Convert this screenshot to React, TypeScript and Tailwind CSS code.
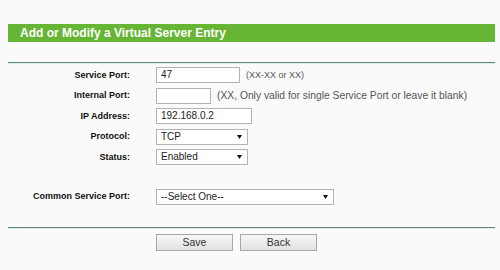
import React from "react";

const font = { fontFamily: '"Liberation Sans", Arial, sans-serif' };

function Arrow() {
  return (
    <svg width="5" height="4" viewBox="0 0 5 4" className="shrink-0">
      <polygon points="0,0 5,0 2.5,4" fill="#111" />
    </svg>
  );
}

function Box({ w, text, select }: { w: string; text?: string; select?: boolean }) {
  return (
    <div
      className={`${w} h-[16px] bg-white border border-[#b4b4b4] flex items-center pl-[4px] pr-[5px] text-[10px] text-[#222] justify-between`}
    >
      <span className="leading-none">{text}</span>
      {select ? <Arrow /> : null}
    </div>
  );
}

function Row({ label, children }: { label: string; children: React.ReactNode }) {
  return (
    <div className="h-[20.5px] flex items-center">
      <div className="w-[122px] text-right font-bold text-[9px] text-[#111] pr-0">{label}</div>
      <div className="ml-[26px] flex items-center">{children}</div>
    </div>
  );
}

export default function App() {
  return (
    <div className="w-[500px] h-[270px] bg-[#fafafa] pt-[24px] pl-[8px] pr-[5px]" style={font}>
      <div className="h-[18px] bg-[#66b535] flex items-center pl-[12px]">
        <span className="text-white font-bold text-[12px] leading-none">Add or Modify a Virtual Server Entry</span>
      </div>
      <div className="mt-[20px] h-[1px] bg-[#5f887e]" />
      <div className="h-[1px] bg-[#dfeae6]" />
      <div className="mt-[1px]">
        <Row label="Service Port:">
          <Box w="w-[84px]" text="47" />
          <span className="ml-[6px] text-[9px] text-[#555]">(XX-XX or XX)</span>
        </Row>
        <Row label="Internal Port:">
          <Box w="w-[55px]" />
          <span className="ml-[6px] text-[10.3px] text-[#555]">(XX, Only valid for single Service Port or leave it blank)</span>
        </Row>
        <Row label="IP Address:">
          <Box w="w-[96px]" text="192.168.0.2" />
        </Row>
        <Row label="Protocol:">
          <Box w="w-[92px]" text="TCP" select />
        </Row>
        <Row label="Status:">
          <Box w="w-[92px]" text="Enabled" select />
        </Row>
      </div>
      <div className="mt-[19px]">
        <Row label="Common Service Port:">
          <Box w="w-[178px]" text="--Select One--" select />
        </Row>
      </div>
      <div className="mt-[20px] h-[1px] bg-[#5f887e]" />
      <div className="h-[1px] bg-[#dfeae6]" />
      <div className="mt-[5px] flex gap-[7px] pl-[148px]">
        <div className="w-[77px] h-[17px] border border-[#a8a8a8] bg-gradient-to-b from-[#f7f7f7] to-[#e2e2e2] flex items-center justify-center text-[10.5px] text-[#333]">
          Save
        </div>
        <div className="w-[77px] h-[17px] border border-[#a8a8a8] bg-gradient-to-b from-[#f7f7f7] to-[#e2e2e2] flex items-center justify-center text-[10.5px] text-[#333]">
          Back
        </div>
      </div>
    </div>
  );
}
